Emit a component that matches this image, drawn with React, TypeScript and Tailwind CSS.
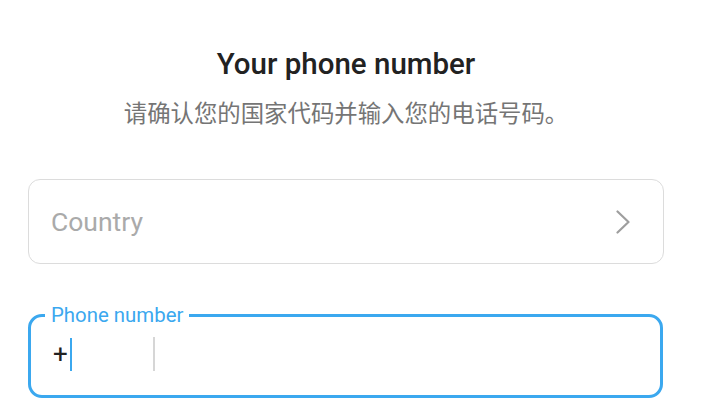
import React from 'react';

const font = { fontFamily: 'Roboto, "Noto Sans CJK SC", sans-serif' };

function Chevron() {
    return (
        <svg width="16" height="24" viewBox="0 0 16 24" fill="none">
            <path d="M2.5 1.5 L13.5 12 L2.5 22.5" stroke="#9e9e9e" strokeWidth="2.2" strokeLinecap="round" strokeLinejoin="round" />
        </svg>
    );
}

export default function App() {
    return (
        <div className="w-[703px] h-[409px] bg-white overflow-hidden flex flex-col items-center pr-[11px]" style={font}>
            <h1 className="mt-[46px] text-[29.5px] leading-[36px] font-medium text-[#222222]">Your phone number</h1>
            <p className="mt-[17px] text-[23.4px] leading-[30px] text-[#757575]">请确认您的国家代码并输入您的电话号码。</p>

            <div className="mt-[50px] self-start ml-[28px] w-[636px] h-[85px] border border-[#dcdcdc] rounded-[12px] flex items-center justify-between pl-[22px] pr-[32px]">
                <span className="text-[26.5px] text-[#aaaaaa]">Country</span>
                <Chevron />
            </div>

            <fieldset className="mt-[40px] self-start ml-[28px] w-[635px] h-[94px] border-[3px] border-[#3ba8ef] rounded-[14px] pl-[22px] pr-[20px]">
                <legend className="-ml-[8px] px-[6px] text-[20.4px] leading-[22px] text-[#3ba8ef]">Phone number</legend>
                <div className="flex items-center h-[52px] mt-[2px]">
                    <div className="w-[100px] flex items-center">
                        <span className="text-[26px] leading-none text-[#222222]">+</span>
                        <span className="ml-[2px] w-[2px] h-[33px] bg-[#3ba8ef]" />
                    </div>
                    <span className="w-[1.5px] h-[34px] bg-[#d6d6d6]" />
                </div>
            </fieldset>
        </div>
    );
}
